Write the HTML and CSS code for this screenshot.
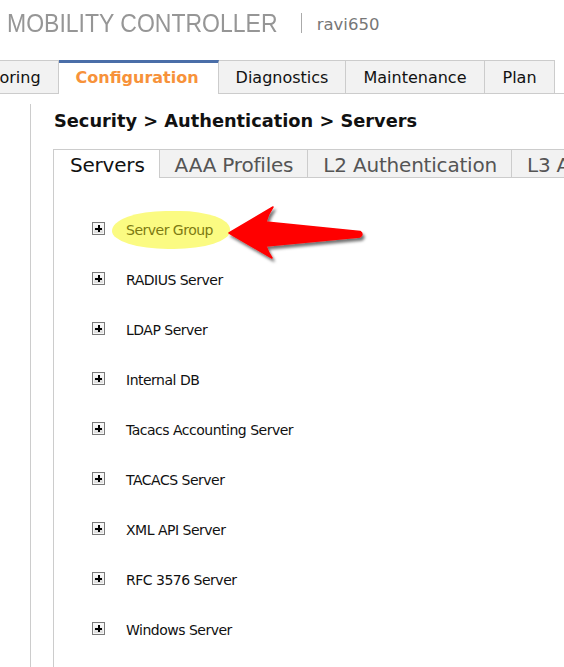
FILE: index.html
```html
<!DOCTYPE html>
<html lang="en">
<head>
<meta charset="utf-8">
<title>Mobility Controller - Servers</title>
<link rel="stylesheet" href="styles.css">
</head>
<body>
<header class="top">
  <span class="logo">MOBILITY CONTROLLER</span>
  <span class="sep"></span>
  <span class="user">ravi650</span>
</header>
<nav class="mainnav">
  <a class="tab first">Monitoring</a>
  <a class="tab active">Configuration</a>
  <a class="tab">Diagnostics</a>
  <a class="tab">Maintenance</a>
  <a class="tab">Plan</a>
  <span class="fill"></span>
</nav>
<div class="page">
  <aside class="side"></aside>
  <main class="content">
    <h1 class="title">Security &gt; Authentication &gt; Servers</h1>
    <div class="subtabs">
      <a class="subtab active">Servers</a>
      <a class="subtab">AAA Profiles</a>
      <a class="subtab">L2 Authentication</a>
      <a class="subtab">L3 Authentication</a>
    </div>
    <div class="panel">
      <ul class="tree">
        <li class="row"><span class="plus"></span><span class="label hl">Server Group</span></li>
        <li class="row"><span class="plus"></span><span class="label">RADIUS Server</span></li>
        <li class="row"><span class="plus"></span><span class="label">LDAP Server</span></li>
        <li class="row"><span class="plus"></span><span class="label">Internal DB</span></li>
        <li class="row"><span class="plus"></span><span class="label">Tacacs Accounting Server</span></li>
        <li class="row"><span class="plus"></span><span class="label">TACACS Server</span></li>
        <li class="row"><span class="plus"></span><span class="label">XML API Server</span></li>
        <li class="row"><span class="plus"></span><span class="label">RFC 3576 Server</span></li>
        <li class="row"><span class="plus"></span><span class="label">Windows Server</span></li>
      </ul>
    </div>
  </main>
</div>
<svg class="arrow" width="564" height="667" viewBox="0 0 564 667" aria-hidden="true">
  <defs>
    <filter id="sh" x="-20%" y="-40%" width="140%" height="180%">
      <feDropShadow dx="2" dy="3" stdDeviation="1.6" flood-color="#000" flood-opacity="0.55"/>
    </filter>
  </defs>
  <path filter="url(#sh)" fill="#ff0000" stroke="#ff0000" stroke-width="1.5" stroke-linejoin="round"
        d="M229 233 L273 207 Q268 214 266 222 L360 231.5 Q364 234 360 237 L266 246 Q268 252 272 258 Z"/>
</svg>
</body>
</html>
```
FILE: styles.css
```css
html, body {
  margin: 0;
  padding: 0;
  height: 100%;
  overflow: hidden;
  background: #fff;
}
body {
  position: relative;
  font-family: "DejaVu Sans", Verdana, sans-serif;
  color: #111;
}
.top {
  box-sizing: border-box;
  height: 60px;
  padding: 8px 0 0 7px;
  display: flex;
  align-items: flex-start;
}
.logo {
  display: inline-block;
  font-family: "Liberation Sans", Arial, sans-serif;
  font-size: 26.5px;
  line-height: 30px;
  color: #969696;
  transform: scaleX(0.868);
  transform-origin: left center;
  margin-right: -42px;
  filter: blur(0.35px);
  white-space: nowrap;
}
.sep {
  width: 1px;
  height: 20px;
  background: #aaa;
  margin: 5px 0 0 24px;
}
.user {
  font-size: 16.5px;
  line-height: 20px;
  color: #777;
  margin: 7px 0 0 15px;
}
.mainnav {
  display: flex;
  white-space: nowrap;
  overflow: hidden;
  height: 34px;
}
.tab {
  box-sizing: border-box;
  height: 34px;
  padding: 7px 17px 0 17px;
  font-size: 16px;
  line-height: 20px;
  color: #111;
  background: #f2f2f2;
  border: 1px solid #ccc;
  border-left: none;
  flex: none;
}
.tab.first {
  margin-left: -63px;
  border-left: 1px solid #ccc;
}
.tab.active {
  background: #fff;
  color: #f7923a;
  font-weight: bold;
  border-top: 3px solid #4a6ea8;
  border-bottom: none;
  padding: 5px 19px 0 17px;
}
.tab:nth-child(4) {
  padding-right: 18px;
}
.fill {
  flex: 1;
  border-bottom: 1px solid #ccc;
  height: 33px;
}
.page {
  display: flex;
  margin-top: 10px;
  height: calc(100% - 104px);
}
.side {
  width: 30px;
  border-right: 1px solid #ccc;
  flex: none;
}
.content {
  flex: 1;
  margin-left: 22px;
  display: flex;
  flex-direction: column;
  min-width: 0;
}
.title {
  margin: 7px 0 0 1px;
  font-size: 17.8px;
  line-height: 20px;
  font-weight: bold;
  color: #111;
  white-space: nowrap;
}
.subtabs {
  display: flex;
  margin-top: 18px;
  white-space: nowrap;
  overflow: hidden;
}
.subtab {
  box-sizing: border-box;
  height: 29px;
  padding: 3px 14px 0 15px;
  font-size: 20px;
  letter-spacing: -0.2px;
  line-height: 24px;
  color: #555;
  background: #f2f2f2;
  border: 1px solid #ccc;
  border-left: none;
  flex: none;
}
.subtab.active {
  background: #fff;
  color: #111;
  border-left: 1px solid #ccc;
  border-bottom: none;
  padding-left: 16px;
}
.panel {
  flex: 1;
  border-left: 1px solid #ccc;
}
.tree {
  list-style: none;
  margin: 0;
  padding: 27px 0 0 38px;
}
.row {
  height: 50px;
  display: flex;
  align-items: center;
}
.plus {
  position: relative;
  box-sizing: border-box;
  width: 13px;
  height: 13px;
  border: 1px solid #7a7a7a;
  background: linear-gradient(#ffffff, #d8d8d8);
  box-shadow: inset 0 0 0 1px #f6f6f6;
  margin-top: -3px;
  flex: none;
}
.plus::before,
.plus::after {
  content: "";
  position: absolute;
  background: #000;
}
.plus::before {
  left: 2px;
  top: 4.5px;
  width: 7px;
  height: 2px;
}
.plus::after {
  left: 4.5px;
  top: 2px;
  width: 2px;
  height: 7px;
}
.label {
  margin-left: 21px;
  font-size: 14px;
  letter-spacing: -0.5px;
  line-height: 17px;
  color: #111;
  white-space: nowrap;
}
.label.hl {
  margin-left: 7px;
  padding: 11px 17px 10px 14px;
  background: #fbfb82;
  color: #7d7a12;
  border-radius: 48% 45% 50% 50% / 55% 50% 50% 50%;
}
.arrow {
  position: absolute;
  left: 0;
  top: 0;
  pointer-events: none;
}
```
